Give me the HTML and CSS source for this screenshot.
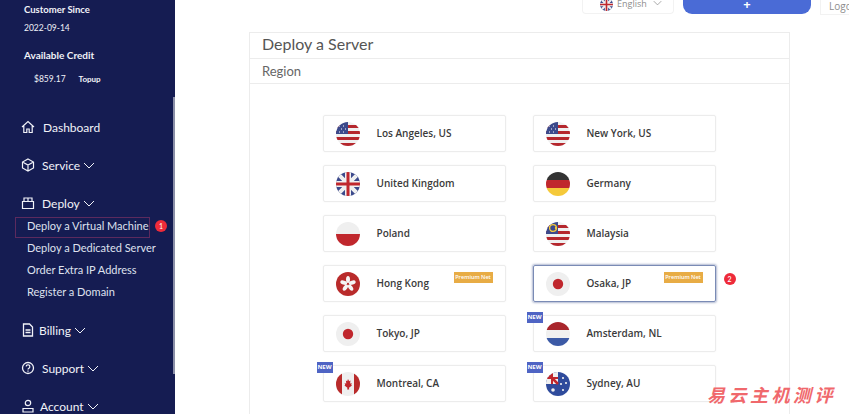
FILE: index.html
```html
<!DOCTYPE html>
<html lang="en">
<head>
    <meta charset="UTF-8">
    <title>Deploy a Server</title>
    <link rel="stylesheet" href="styles.css">
</head>
<body>

    <svg class="defs" width="0" height="0">
        <defs>
            <clipPath id="disc"><circle cx="12" cy="12" r="12"/></clipPath>
            <symbol id="chev" viewBox="0 0 12 7"><path d="M1 1l5 5 5-5" fill="none" stroke="currentColor" stroke-width="1"/></symbol>

            <symbol id="flag-us" viewBox="0 0 24 24">
                <g clip-path="url(#disc)">
                    <rect width="24" height="24" fill="#f0f0f0"/>
                    <path d="M0 3h24v3H0zM0 9h24v3H0zM0 15h24v3H0zM0 21h24v3H0z" fill="#b5272d"/>
                    <rect width="12" height="12" fill="#3c4a8c"/>
                    <path d="M3 4h1M7 4h1M5 7h1M9 7h1M3 10h1M7 10h1" stroke="#fff" stroke-width="1"/>
                </g>
            </symbol>
            <symbol id="flag-uk" viewBox="0 0 24 24">
                <g clip-path="url(#disc)">
                    <rect width="24" height="24" fill="#3c4a8c"/>
                    <path d="M0 0l24 24M24 0L0 24" stroke="#f0f0f0" stroke-width="4"/>
                    <path d="M12 0v24M0 12h24" stroke="#f0f0f0" stroke-width="6"/>
                    <path d="M12 0v24M0 12h24" stroke="#c0272d" stroke-width="3"/>
                </g>
            </symbol>
            <symbol id="flag-de" viewBox="0 0 24 24">
                <g clip-path="url(#disc)">
                    <rect width="24" height="8" fill="#333"/>
                    <rect y="8" width="24" height="8" fill="#c0272d"/>
                    <rect y="16" width="24" height="8" fill="#f5c93a"/>
                </g>
            </symbol>
            <symbol id="flag-pl" viewBox="0 0 24 24">
                <g clip-path="url(#disc)">
                    <rect width="24" height="12" fill="#efefef"/>
                    <rect y="12" width="24" height="12" fill="#c0272d"/>
                </g>
            </symbol>
            <symbol id="flag-my" viewBox="0 0 24 24">
                <g clip-path="url(#disc)">
                    <rect width="24" height="24" fill="#f0f0f0"/>
                    <path d="M0 3h24v3H0zM0 9h24v3H0zM0 15h24v3H0zM0 21h24v3H0z" fill="#b5272d"/>
                    <rect width="12" height="12" fill="#3c4a8c"/>
                    <circle cx="7" cy="6" r="3.4" fill="none" stroke="#f5c93a" stroke-width="1.4"/>
                    <circle cx="10" cy="6" r="1.2" fill="#f5c93a"/>
                </g>
            </symbol>
            <symbol id="flag-hk" viewBox="0 0 24 24">
                <g clip-path="url(#disc)">
                    <rect width="24" height="24" fill="#b92b2b"/>
                    <g fill="#f5f5f5">
                        <ellipse cx="12" cy="7.5" rx="2" ry="3.5"/>
                        <ellipse cx="12" cy="7.5" rx="2" ry="3.5" transform="rotate(72 12 12)"/>
                        <ellipse cx="12" cy="7.5" rx="2" ry="3.5" transform="rotate(144 12 12)"/>
                        <ellipse cx="12" cy="7.5" rx="2" ry="3.5" transform="rotate(216 12 12)"/>
                        <ellipse cx="12" cy="7.5" rx="2" ry="3.5" transform="rotate(288 12 12)"/>
                    </g>
                </g>
            </symbol>
            <symbol id="flag-jp" viewBox="0 0 24 24">
                <circle cx="12" cy="12" r="12" fill="#efefef"/>
                <circle cx="12" cy="12" r="5.2" fill="#c0272d"/>
            </symbol>
            <symbol id="flag-nl" viewBox="0 0 24 24">
                <g clip-path="url(#disc)">
                    <rect width="24" height="8" fill="#a9262c"/>
                    <rect y="8" width="24" height="8" fill="#f0f0f0"/>
                    <rect y="16" width="24" height="8" fill="#3c5aa6"/>
                </g>
            </symbol>
            <symbol id="flag-ca" viewBox="0 0 24 24">
                <g clip-path="url(#disc)">
                    <rect width="24" height="24" fill="#efefef"/>
                    <rect width="6" height="24" fill="#b92b2b"/>
                    <rect x="18" width="6" height="24" fill="#b92b2b"/>
                    <path d="M12 7l1.2 2.2 1.3-.6-.4 3 1.7-.4-.6 1.8.8.6-3 2.2.2 1.6h-2l.2-1.6-3-2.2.8-.6-.6-1.8 1.7.4-.4-3 1.3.6z" fill="#c0272d"/>
                </g>
            </symbol>
            <symbol id="flag-au" viewBox="0 0 24 24">
                <g clip-path="url(#disc)">
                    <rect width="24" height="24" fill="#2f4b9c"/>
                    <rect width="12" height="12" fill="#f0f0f0"/>
                    <path d="M0 0l12 12" stroke="#c0272d" stroke-width="2.5"/>
                    <path d="M6 0v12M0 6h12" stroke="#c0272d" stroke-width="2"/>
                    <g fill="#f0f0f0">
                        <circle cx="7" cy="18" r="1.8"/>
                        <circle cx="17" cy="6" r="1.1"/>
                        <circle cx="20" cy="11" r="1.1"/>
                        <circle cx="15" cy="12" r="1.1"/>
                        <circle cx="17" cy="18" r="1.1"/>
                    </g>
                </g>
            </symbol>
        </defs>
    </svg>

    <div class="app">
        <aside class="sidebar">
            <div class="info-title first-title">Customer Since</div>
            <div class="info-value">2022-09-14</div>
            <div class="info-title credit-title">Available Credit</div>
            <div class="credit-row">
                <span class="credit-amount">$859.17</span>
                <span class="topup">Topup</span>
            </div>

            <nav class="nav">
                <div class="nav-item">
                    <svg class="nav-icon" viewBox="0 0 14 14"><path d="M1 7l6-5.500 6 5.500M2.800 6v6.500h3v-3.500h2.400v3.500h3V6" fill="none" stroke="currentColor" stroke-width="1.200"/></svg>
                    <span class="nav-label dash-label">Dashboard</span>
                </div>
                <div class="nav-item">
                    <svg class="nav-icon" viewBox="0 0 14 14"><path d="M7 1l5.500 3v6L7 13l-5.500-3V4zM1.500 4L7 7l5.500-3M7 7v6" fill="none" stroke="currentColor" stroke-width="1.200"/></svg>
                    <span class="nav-label">Service</span>
                    <svg class="chev"><use href="#chev"/></svg>
                </div>
                <div class="nav-item">
                    <svg class="nav-icon" viewBox="0 0 14 14"><path d="M1.500 5.500h11v7h-11zM3 5.500V2h8v3.500M7 2v3.500" fill="none" stroke="currentColor" stroke-width="1.200"/></svg>
                    <span class="nav-label">Deploy</span>
                    <svg class="chev"><use href="#chev"/></svg>
                </div>
                <div class="sub-list">
                    <div class="sub-item sub-active">Deploy a Virtual Machine<span class="step step-one">1</span></div>
                    <div class="sub-item">Deploy a Dedicated Server</div>
                    <div class="sub-item">Order Extra IP Address</div>
                    <div class="sub-item">Register a Domain</div>
                </div>
                <div class="nav-item">
                    <svg class="nav-icon" viewBox="0 0 14 14"><path d="M2.500 1h6l3 3v9h-9zM4.500 7h5M4.500 9.500h5" fill="none" stroke="currentColor" stroke-width="1.300"/></svg>
                    <span class="nav-label billing-label">Billing</span>
                    <svg class="chev"><use href="#chev"/></svg>
                </div>
                <div class="nav-item">
                    <svg class="nav-icon" viewBox="0 0 14 14"><circle cx="7" cy="7" r="5.500" fill="none" stroke="currentColor" stroke-width="1.300"/><path d="M5.200 5.600a1.800 1.800 0 1 1 2.700 1.600c-.6.400-.9.700-.9 1.300M7 9.600v1.200" fill="none" stroke="currentColor" stroke-width="1.200"/></svg>
                    <span class="nav-label">Support</span>
                    <svg class="chev"><use href="#chev"/></svg>
                </div>
                <div class="nav-item">
                    <svg class="nav-icon" viewBox="0 0 14 14"><circle cx="7" cy="4" r="2.700" fill="none" stroke="currentColor" stroke-width="1.200"/><path d="M2 9.500h10v3.500H2z" fill="none" stroke="currentColor" stroke-width="1.200"/></svg>
                    <span class="nav-label account-label">Account</span>
                    <svg class="chev"><use href="#chev"/></svg>
                </div>
            </nav>
            <div class="side-scroll"></div>
        </aside>

        <main class="main">
            <header class="topbar">
                <div class="lang">
                    <svg class="lang-flag"><use href="#flag-uk"/></svg>
                    <span>English</span>
                    <svg class="lang-chev"><use href="#chev"/></svg>
                </div>
                <div class="add-btn">+</div>
                <div class="logout">Logout</div>
            </header>

            <section class="panel">
                <div class="panel-title">Deploy a Server</div>
                <div class="panel-sub">Region</div>
                <div class="region-grid">
                    <div class="card"><svg class="flag"><use href="#flag-us"/></svg>Los Angeles, US</div>
                    <div class="card"><svg class="flag"><use href="#flag-us"/></svg>New York, US</div>
                    <div class="card"><svg class="flag"><use href="#flag-uk"/></svg>United Kingdom</div>
                    <div class="card"><svg class="flag"><use href="#flag-de"/></svg>Germany</div>
                    <div class="card"><svg class="flag"><use href="#flag-pl"/></svg>Poland</div>
                    <div class="card"><svg class="flag"><use href="#flag-my"/></svg>Malaysia</div>
                    <div class="card"><svg class="flag"><use href="#flag-hk"/></svg>Hong Kong<span class="premium">Premium Net</span></div>
                    <div class="card card-active"><svg class="flag"><use href="#flag-jp"/></svg>Osaka, JP<span class="premium">Premium Net</span><span class="step step-two">2</span></div>
                    <div class="card"><svg class="flag"><use href="#flag-jp"/></svg>Tokyo, JP</div>
                    <div class="card"><span class="new-tag">NEW</span><svg class="flag"><use href="#flag-nl"/></svg>Amsterdam, NL</div>
                    <div class="card"><span class="new-tag">NEW</span><svg class="flag"><use href="#flag-ca"/></svg>Montreal, CA</div>
                    <div class="card"><span class="new-tag">NEW</span><svg class="flag"><use href="#flag-au"/></svg>Sydney, AU</div>
                </div>
            </section>
        </main>
    </div>

    <div class="watermark">易云主机测评</div>

</body>
</html>
```

FILE: styles.css
```css
html, body {
    margin: 0;
    height: 414px;
    overflow: hidden;
}

body {
    background-color: #fff;
    color: #333;
    font-family: 'Open Sans', 'Noto Sans', sans-serif;
}

.defs {
    position: absolute;
}

.app {
    display: flex;
    height: 414px;
    overflow: hidden;
}

/* sidebar */
.sidebar {
    position: relative;
    flex: none;
    width: 175px;
    height: 414px;
    overflow: hidden;
    background-color: #151c52;
    color: #f1f2f8;
    font-family: Lato, 'Open Sans', sans-serif;
}

.side-scroll {
    position: absolute;
    top: 97px;
    right: 0;
    width: 2px;
    height: 277px;
    background-color: #8b8fa8;
}

.info-title {
    padding-left: 24px;
    font-size: 9.500px;
    font-weight: 700;
    line-height: 18px;
}

.first-title {
    padding-top: 1px;
}

.info-value {
    padding-left: 24px;
    font-size: 8.500px;
    line-height: 18px;
}

.credit-title {
    margin-top: 9px;
    font-size: 10px;
}

.credit-row {
    display: flex;
    align-items: center;
    gap: 13px;
    padding-left: 34px;
    margin-top: 6px;
    line-height: 18px;
}

.credit-amount {
    font-size: 8.500px;
}

.topup {
    font-size: 8px;
    font-weight: 700;
}

.nav {
    margin-top: 20px;
}

.nav-item {
    display: flex;
    align-items: center;
    height: 38px;
    padding-left: 21px;
    font-size: 12px;
}

.nav-icon {
    flex: none;
    width: 14px;
    height: 14px;
}

.nav-label {
    margin-left: 7px;
}

.dash-label {
    margin-left: 8px;
}

.billing-label {
    margin-left: 4px;
}

.account-label {
    margin-left: 5px;
}

.chev {
    width: 12px;
    height: 7px;
    margin-left: 3px;
}

.sub-list {
    margin-top: -7px;
    margin-bottom: 8px;
}

.sub-item {
    position: relative;
    padding-left: 27px;
    font-size: 11px;
    line-height: 22px;
    color: #dfe1ee;
    white-space: nowrap;
}

.sub-active::before {
    content: "";
    position: absolute;
    top: 2px;
    left: 15px;
    width: 133px;
    height: 19px;
    border: 1px solid #5c2a5e;
}

.step {
    position: absolute;
    width: 12px;
    height: 12px;
    border-radius: 50%;
    background-color: #ee2b3a;
    color: #fff;
    font-family: Lato, sans-serif;
    font-size: 7px;
    line-height: 12px;
    text-align: center;
}

.step-one {
    top: 5px;
    left: 155px;
}

.step-two {
    top: 7px;
    left: 190px;
}

/* top bar */
.main {
    flex: 1;
    min-width: 0;
}

.topbar {
    display: flex;
    align-items: flex-start;
    height: 15px;
    padding-left: 407px;
}

.lang {
    display: flex;
    align-items: flex-start;
    flex: none;
    box-sizing: border-box;
    width: 92px;
    height: 14px;
    padding-left: 17px;
    border: 1px solid #f2f2f2;
    border-top: 0;
    border-radius: 0 0 4px 4px;
    color: #8d8d8d;
    font-size: 9px;
    line-height: 8px;
}

.lang-flag {
    width: 13px;
    height: 13px;
    margin-right: 4px;
    margin-top: -2px;
}

.lang-chev {
    width: 9px;
    height: 6px;
    margin-left: 6px;
}

.add-btn {
    flex: none;
    width: 128px;
    height: 14px;
    margin-left: 9px;
    border-radius: 0 0 9px 9px;
    background-color: #4a6bd6;
    color: #fff;
    font-size: 13px;
    font-weight: 700;
    line-height: 8px;
    text-align: center;
}

.logout {
    flex: none;
    box-sizing: border-box;
    width: 40px;
    height: 15px;
    margin-left: 9px;
    padding-left: 8px;
    border: 1px solid #f2f2f2;
    border-top: 0;
    color: #8d8d8d;
    font-size: 10px;
    line-height: 12px;
    white-space: nowrap;
    overflow: hidden;
}

/* panel */
.panel {
    box-sizing: border-box;
    width: 541px;
    margin-top: 17px;
    margin-left: 74px;
    border: 1px solid #ececec;
    border-bottom: 0;
    font-family: Lato, 'Open Sans', sans-serif;
}

.panel-title {
    box-sizing: border-box;
    height: 26px;
    padding-left: 12px;
    border-bottom: 1px solid #ececec;
    color: #555;
    font-size: 16px;
    line-height: 22px;
}

.panel-sub {
    box-sizing: border-box;
    height: 25px;
    padding-left: 12px;
    border-bottom: 1px solid #ececec;
    color: #666;
    font-size: 13px;
    line-height: 24px;
}

.region-grid {
    display: grid;
    grid-template-columns: 183px 183px;
    grid-auto-rows: 37px;
    column-gap: 27px;
    row-gap: 13px;
    justify-content: center;
    padding: 31px 0 20px;
    margin-left: -1px;
    font-family: 'Open Sans', 'Noto Sans', sans-serif;
}

.card {
    position: relative;
    display: flex;
    align-items: center;
    box-sizing: border-box;
    padding-left: 12px;
    padding-bottom: 2px;
    border: 1px solid #ececec;
    border-radius: 2px;
    box-shadow: 0 0 2px rgba(0, 0, 0, 0.05);
    color: #3b3b3b;
    font-size: 10px;
    font-weight: 600;
}

.card-active {
    border: 1px solid #7a8bb5;
    box-shadow: 0 0 2px 1px rgba(60, 80, 140, 0.4);
}

.flag {
    flex: none;
    width: 24px;
    height: 24px;
    margin-top: 2px;
    margin-right: 17px;
}

.premium {
    position: absolute;
    top: 6px;
    right: 12px;
    width: 39px;
    height: 11px;
    background-color: #e8ac45;
    color: #fff;
    font-size: 5.500px;
    font-weight: 600;
    line-height: 11px;
    text-align: center;
    white-space: nowrap;
}

.new-tag {
    position: absolute;
    top: -4px;
    left: -7px;
    width: 16px;
    height: 11px;
    background-color: #4f64c4;
    color: #fff;
    font-size: 6px;
    font-weight: 700;
    line-height: 11px;
    text-align: center;
}

.watermark {
    position: absolute;
    top: 381px;
    left: 707px;
    color: #f0686c;
    font-family: 'Noto Sans CJK SC', sans-serif;
    font-size: 18px;
    font-style: italic;
    font-weight: 700;
    letter-spacing: 3.500px;
    line-height: 26px;
    white-space: nowrap;
}
```
